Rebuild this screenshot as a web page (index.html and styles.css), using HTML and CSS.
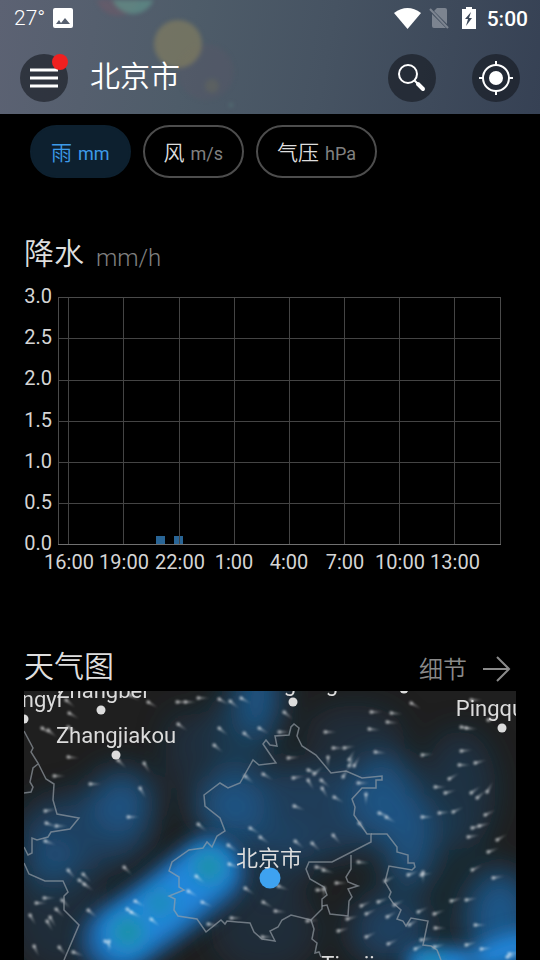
FILE: index.html
```html
<!DOCTYPE html>
<html lang="zh-CN">
<head>
  <meta charset="UTF-8">
  <meta name="viewport" content="width=device-width, initial-scale=1">
  <title>北京市</title>
  <link rel="stylesheet" href="styles.css">
</head>
<body>
  <header class="top">
    <svg class="bokeh" width="260" height="114" aria-hidden="true">
      <circle cx="118" cy="-6" r="22" fill="#a05060" opacity=".2"/>
      <circle cx="133" cy="-8" r="22" fill="#5f8f88" opacity=".75"/>
      <circle cx="206" cy="72" r="28" fill="#5d5568" opacity=".3"/>
      <circle cx="178" cy="44" r="24" fill="#85805f" opacity=".65"/>
      <circle cx="212" cy="86" r="7" fill="#77784f" opacity=".25"/>
      <circle cx="231" cy="105" r="2" fill="#5f8f88" opacity=".5"/>
    </svg>
    <div class="status">
      <span class="temp">27°</span>
      <svg width="20" height="20" viewBox="0 0 20 20"><path fill="#fff" fill-rule="evenodd" d="M2 0h16a2 2 0 0 1 2 2v16a2 2 0 0 1-2 2H2a2 2 0 0 1-2-2V2a2 2 0 0 1 2-2zM3 16h14l-5-6-4 5-2-3z"/></svg>
      <span class="space"></span>
      <svg class="wifi" width="27" height="21" viewBox="0 0 27 21"><path fill="#fff" d="M13.500 21L0 5Q13.500-5 27 5z"/></svg>
      <svg class="sim" width="20" height="22" viewBox="0 0 20 22"><path fill="#7c8490" d="M8 1h8a2 2 0 0 1 2 2v14L5 4zM3 7l14 14H5a2 2 0 0 1-2-2z"/><path stroke="#7c8490" stroke-width="2" d="M1 2l18 19"/></svg>
      <svg class="battery" width="14" height="22" viewBox="0 0 14 22"><path fill="#fff" fill-rule="evenodd" d="M4 0h6v2h4v20H0V2h4zM9 5l-6 7h3l-2 7 6-8H7z"/></svg>
      <span class="clock">5:00</span>
    </div>
    <div class="bar">
      <button class="round" aria-label="菜单">
        <svg width="28" height="20"><path stroke="#fff" stroke-width="3" d="M0 2h28M0 10h28M0 18h28"/></svg>
        <i class="badge"></i>
      </button>
      <h1>北京市</h1>
      <button class="round" aria-label="搜索">
        <svg width="30" height="30" fill="none" stroke="#fff"><circle cx="11" cy="11" r="9" stroke-width="2"/><path stroke-width="2" d="M17 17l4 4"/><path stroke-width="4" stroke-linecap="round" d="M21 21l5 5"/></svg>
      </button>
      <button class="round" aria-label="定位">
        <svg width="34" height="34" fill="none" stroke="#fff" stroke-width="2"><circle cx="17" cy="17" r="13"/><circle cx="17" cy="17" r="6" fill="#fff"/><path d="M17 0v5M17 29v5M0 17h5M29 17h5"/></svg>
      </button>
    </div>
  </header>

  <main>
    <nav class="pills">
      <button class="pill on">雨<small>mm</small></button>
      <button class="pill">风<small>m/s</small></button>
      <button class="pill">气压<small>hPa</small></button>
    </nav>

    <section class="rain">
      <h2>降水<span class="unit">mm/h</span></h2>
      <svg class="chart" viewBox="24 285 492 290">
        <g class="bars"><path d="M156 536h9v8h-9zM174 536h9v8h-9z"/></g>
        <path class="grid" d="M59 338H500M59 380H500M59 421H500M59 462H500M59 503H500M68 297V544M123 297V544M179 297V544M234 297V544M289 297V544M344 297V544M399 297V544M454 297V544"/>
        <path class="frame" d="M58 297H500V544H58z"/>
        <path class="base" d="M58 544H501"/>
        <g class="ylab">
          <text x="52" y="303">3.0</text><text x="52" y="344">2.5</text><text x="52" y="385">2.0</text><text x="52" y="427">1.5</text><text x="52" y="468">1.0</text><text x="52" y="509">0.5</text><text x="52" y="550">0.0</text>
        </g>
        <g class="xlab">
          <text x="69" y="569">16:00</text><text x="124" y="569">19:00</text><text x="180" y="569">22:00</text><text x="234" y="569">1:00</text><text x="289" y="569">4:00</text><text x="345" y="569">7:00</text><text x="400" y="569">10:00</text><text x="455" y="569">13:00</text>
        </g>
      </svg>
    </section>

    <section class="weather">
      <div class="head">
        <h2>天气图</h2>
        <a class="more" href="#map"><span>细节</span>
          <svg width="28" height="26" fill="none" stroke="#8a8a8a" stroke-width="2"><path d="M0 13h26M14 1l12 12-12 12"/></svg>
        </a>
      </div>
      <svg class="map" id="map" viewBox="24 691 492 269" preserveAspectRatio="xMidYMin slice">
        <defs>
          <filter id="soft" x="-100%" y="-100%" width="300%" height="300%"><feGaussianBlur stdDeviation="15"/></filter>
          <filter id="tight" x="-50%" y="-50%" width="200%" height="200%"><feGaussianBlur stdDeviation="9"/></filter>
          <linearGradient id="tail"><stop offset="0" stop-color="#fff" stop-opacity=".5"/><stop offset="1" stop-color="#fff" stop-opacity="0"/></linearGradient>
          <g id="drop"><path fill="url(#tail)" d="M0-1.500V1.500L13 0z"/><circle r="2" fill="#fff" opacity=".4"/></g>
        </defs>
        <rect x="24" y="691" width="492" height="269" fill="#1f1f1f"/>
        <g filter="url(#soft)" fill="#1c5688">
          <ellipse cx="258" cy="695" rx="22" ry="44"/>
          <ellipse cx="238" cy="735" rx="36" ry="40" opacity=".45"/>
          <ellipse cx="183" cy="750" rx="18" ry="40" opacity=".3"/>
          <ellipse cx="122" cy="802" rx="32" ry="32" opacity=".9"/>
          <ellipse cx="85" cy="832" rx="66" ry="38" opacity=".6"/>
          <ellipse cx="50" cy="862" rx="28" ry="26" opacity=".7"/>
          <ellipse cx="60" cy="915" rx="50" ry="60" opacity=".25"/>
          <ellipse cx="230" cy="805" rx="36" ry="36" opacity=".9"/>
          <ellipse cx="310" cy="812" rx="85" ry="48" opacity=".55"/>
          <ellipse cx="270" cy="860" rx="45" ry="35" opacity=".3"/>
          <ellipse cx="355" cy="735" rx="50" ry="30" opacity=".25"/>
          <ellipse cx="384" cy="795" rx="34" ry="42" opacity=".9"/>
          <ellipse cx="410" cy="840" rx="26" ry="48" opacity=".9"/>
          <ellipse cx="460" cy="790" rx="36" ry="60" opacity=".35"/>
          <ellipse cx="390" cy="930" rx="40" ry="36" opacity=".6"/>
          <ellipse cx="265" cy="930" rx="55" ry="45" opacity=".25"/>
          <ellipse cx="500" cy="920" rx="34" ry="50"/>
          <ellipse cx="430" cy="875" rx="60" ry="70" opacity=".1"/>
        </g>
        <g filter="url(#tight)" fill="none" stroke-linecap="round">
          <path stroke="#1d5c97" stroke-width="74" d="M118 940L165 907 209 872"/>
          <path stroke="#2186da" stroke-width="50" d="M124 934L165 905 209 868"/>
          <path stroke="#2186da" stroke-width="28" d="M420 962H460M488 956L520 945"/>
        </g>
        <g filter="url(#tight)" fill="#1e93a4">
          <circle cx="128" cy="932" r="15"/><circle cx="160" cy="903" r="12" opacity=".7"/><circle cx="209" cy="867" r="14"/><circle cx="432" cy="963" r="9"/>
        </g>
        <g id="wind"></g>
        <g class="border">
          <path d="M24 731L33 748 31 752 38 763 46 779 54 784 53 800 57 814 79 818 70 829 51 832 48 837 37 840 32 838V853L28 855 24 847M38 764L33 768 30 782 33 787 31 792 24 793M24 863L29 874 45 881H63L68 892 64 896V910L79 925 64 960"/>
          <path d="M204 795L220 783 228 788 240 783 253 760 259 765 276 763 263 744 266 740 270 745 277 746 275 736 289 735 291 727 294 724 299 728 297 736 302 746 316 755 331 773 346 771 362 778 382 776V780H376V788H362L352 799 355 807 354 815 367 834H371V842L332 862H309L306 869 310 879 324 887 327 895 322 899V909L311 920 291 915 282 920 278 927 270 931 275 941 262 939 254 932 250 923 227 921 225 924 221 920 206 932 197 919 178 916 174 910 175 899 169 896 184 890 179 887V877L169 871 172 862 189 850 203 848 207 842 212 847 217 836 225 831 220 818 205 806z"/>
          <path d="M371 834H387L397 847V852L408 855V863H414L415 867 412 870 389 866 385 882 391 892 389 897 393 903 401 910 397 919 403 921 406 926 411 918 428 921 423 945 431 946 437 950 441 960"/>
          <path d="M351 855V869L346 877 348 882 358 886 348 889 352 897 349 901 348 916 330 914 327 905 322 906M311 920L314 929 312 939 317 943 315 953 319 952 321 957"/>
        </g>
        <g fill="#dcdcdc"><circle cx="24" cy="719" r="4.500"/><circle cx="101" cy="710" r="4.500"/><circle cx="116" cy="755" r="4.500"/><circle cx="293" cy="702" r="4.500"/><circle cx="404" cy="689" r="4.500"/><circle cx="502" cy="728" r="4.500"/></g>
        <circle cx="270" cy="878" r="10.500" fill="#3ea2f0"/>
        <g class="city">
          <text x="62" y="707" text-anchor="end">Zhangyi</text><text x="102" y="698">Zhangbei</text><text x="116" y="743">Zhangjiakou</text><text x="293" y="691">Fengning</text><text x="502" y="716">Pingquan</text><text x="354" y="972">Tianjin</text><text x="269" y="866">北京市</text>
        </g>
      </svg>
    </section>
  </main>
  <script src="wind.js"></script>
</body>
</html>
```
FILE: styles.css
```css
* { box-sizing:border-box; }
body { margin:0; min-height:100vh; display:flex; flex-direction:column; background:#000; color:#dedede; font-family:Roboto,"Noto Sans CJK SC",sans-serif; }
h1, h2 { margin:0; font-weight:350; }
button { font-family:inherit; color:inherit; border:0; padding:0; cursor:pointer; }
svg { display:block; }

/* header */
.top { position:relative; height:114px; overflow:hidden; background:linear-gradient(100deg,#5c6273 0,#4e5c69 35%,#465362 60%,#364154 100%); color:#fff; }
.bokeh { position:absolute; left:0; top:0; filter:blur(2px); }
.status { position:relative; display:flex; align-items:center; height:36px; padding:0 12px 0 14px; }
.temp { width:39px; font-size:21px; font-weight:300; }
.space { flex:1; }
.wifi { margin-right:8px; }
.sim { margin-right:13px; }
.battery { margin-right:11px; }
.clock { padding-top:2px; font-size:21px; font-weight:500; }
.bar { position:relative; display:flex; align-items:center; gap:36px; padding:18px 20px; }
.bar h1 { flex:1; margin-left:-14px; padding-bottom:2px; font-size:30px; line-height:40px; }
.round { position:relative; display:flex; align-items:center; justify-content:center; width:48px; height:48px; border-radius:50%; background:rgba(20,24,30,.6); }
.badge { position:absolute; right:0; top:0; width:16px; height:16px; border-radius:50%; background:#f02020; }

/* parameter buttons */
main { flex:1; display:flex; flex-direction:column; }
.pills { display:flex; gap:12px; padding:11px 30px 0; }
.pill { height:53px; padding:0 19px 2px; border:2px solid #4d4d4d; border-radius:27px; background:none; font-size:21px; font-weight:350; }
.pill small { margin-left:6px; font-size:18px; font-weight:400; color:#808080; }
.pill.on { background:#0d202f; border-color:#0d202f; color:#3d9be9; }
.pill.on small { color:inherit; }

/* rain chart */
.rain { padding:54px 24px 0; }
h2 { font-size:30px; line-height:44px; }
.rain h2 { display:flex; }
.unit { padding-top:4px; margin-left:12px; font-size:24px; font-weight:300; color:#808080; }
.chart { width:100%; margin-top:5px; font-size:20px; fill:#d5d5d5; }
.grid, .frame, .base { fill:none; stroke:#444; shape-rendering:crispEdges; }
.frame { stroke:#4a4a4a; }
.base { stroke:#707070; }
.bars { fill:#296596; }
.ylab { text-anchor:end; }
.xlab { text-anchor:middle; }

/* map */
.weather { flex:1; display:flex; flex-direction:column; padding:68px 24px 0; }
.head { display:flex; justify-content:space-between; align-items:center; height:48px; padding-right:5px; }
.more { display:flex; align-items:center; gap:16px; padding-top:4px; font-size:24px; font-weight:350; color:#8a8a8a; text-decoration:none; }
.more span { padding-bottom:4px; }
.map { flex:1; width:100%; min-height:240px; }
#wind { filter:blur(1px); }
.border { fill:none; stroke:#9aa2a9; stroke-width:1.5; stroke-opacity:.65; }
.city { font-size:22px; fill:#dcdcdc; text-anchor:middle; }
```
FILE: wind.js
```js
// x, y, direction of the tail in degrees
const drops = [
  [66,700,40],[69,713,30],[68,727,30],[42,728,35],[48,730,40],[68,757,5],[118,760,45],[144,763,60],[54,776,0],[90,784,0],[140,788,60],
  [148,702,30],[130,695,30],[177,702,0],[185,702,0],[198,698,0],[219,699,30],[230,701,40],[241,698,30],[178,724,35],[219,728,40],[244,733,40],[259,728,30],[214,745,40],[263,774,30],[245,776,40],
  [45,811,350],[46,823,20],[56,826,0],[128,817,0],[45,841,20],[68,870,50],[83,874,45],[79,880,35],[84,884,35],[124,867,45],[198,824,40],[228,845,35],[229,864,20],[196,876,40],[250,828,30],[260,837,35],
  [30,915,60],[50,917,60],[47,921,60],[56,909,45],[62,900,45],[34,946,65],[59,947,50],[73,952,20],[36,903,0],[44,898,0],[127,909,35],[131,912,30],[151,919,40],[105,941,45],[109,941,90],[88,910,40],[135,901,30],[188,891,30],[202,902,25],[245,888,35],[263,902,30],[231,918,0],[208,924,10],[262,937,0],
  [284,712,40],[279,732,0],[371,712,0],[391,713,5],[411,703,30],[387,722,5],[369,729,5],[325,732,0],[375,752,5],[422,755,355],[333,748,0],[344,748,350],[328,757,90],[288,758,355],[349,760,300],[349,766,300],[354,766,300],[308,770,20],[314,774,320],[293,778,350],[308,780,60],[321,780,40],[343,777,300],[358,783,0],[322,788,60],[366,794,90],[334,797,30],
  [461,727,10],[466,728,5],[461,751,355],[459,765,0],[475,763,345],[449,779,330],[435,787,0],[445,793,345],[471,793,325],[477,798,320],[487,792,300],[488,720,345],[471,700,0],
  [294,806,20],[379,813,20],[386,817,30],[422,817,0],[439,813,355],[453,812,335],[485,815,335],[472,828,345],[479,826,345],[468,837,350],[497,840,330],[488,852,340],[472,870,335],[493,878,350],[359,823,50],[333,835,50],[295,841,40],[312,843,45],[358,862,5],[316,867,10],[323,870,15],[336,883,0],[317,890,0],[324,888,90],[278,886,20],[408,875,340],[421,875,350],[423,872,90],
  [385,881,335],[361,906,335],[378,902,340],[394,905,335],[387,917,330],[366,914,335],[347,919,345],[307,921,355],[418,912,335],[434,914,340],[451,901,345],[466,900,350],[409,925,330],[338,931,345],[366,937,335],[388,944,335],[275,911,5],[435,928,0],[475,925,0],[421,940,350],[415,949,335],[434,947,345],[466,945,345],[481,949,355],[509,954,350],[507,957,350]
];

document.getElementById("wind").innerHTML = drops
  .map(d => `<use href="#drop" transform="translate(${d[0]} ${d[1]}) rotate(${d[2]})"/>`)
  .join("");
```
